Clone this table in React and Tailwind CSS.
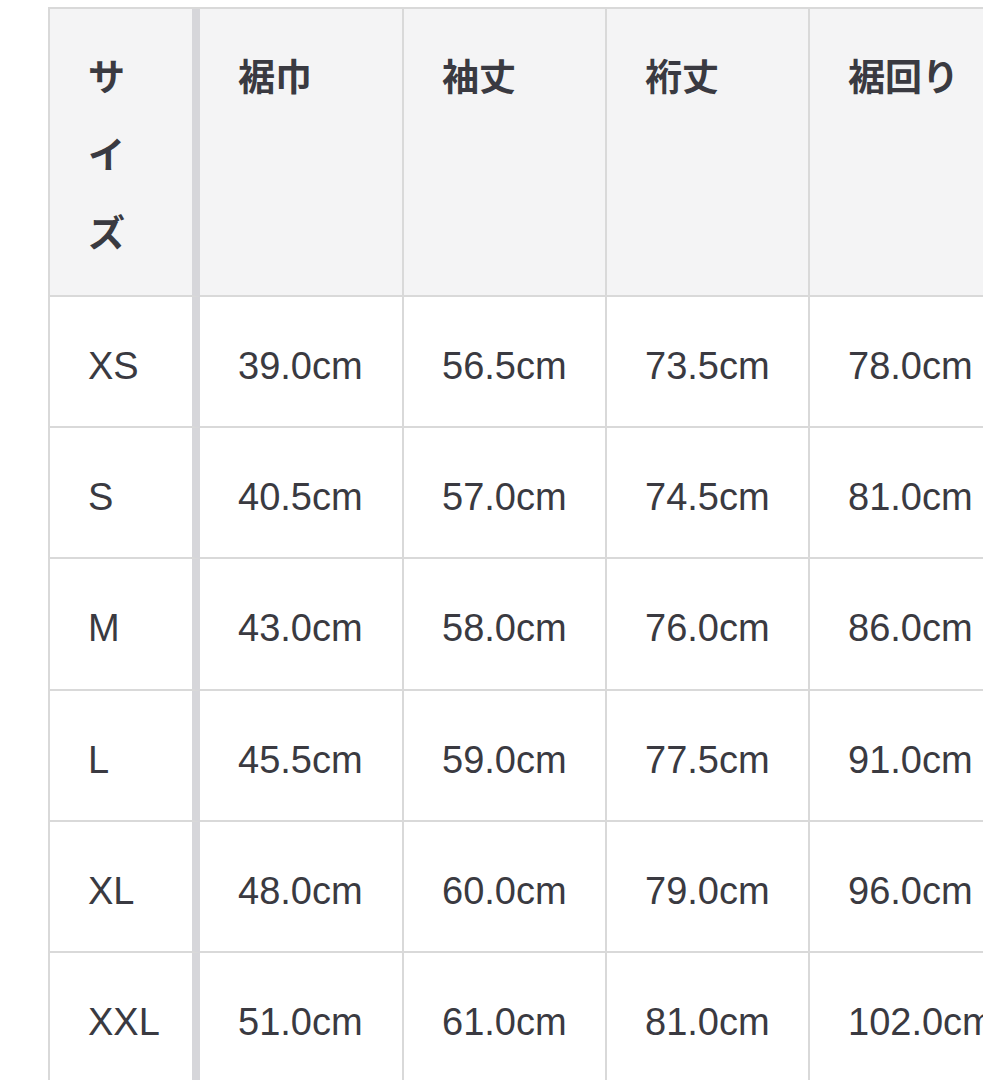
const headers = ["サイズ", "裾巾", "袖丈", "裄丈", "裾回り"];

const rows = [
  ["XS", "39.0cm", "56.5cm", "73.5cm", "78.0cm"],
  ["S", "40.5cm", "57.0cm", "74.5cm", "81.0cm"],
  ["M", "43.0cm", "58.0cm", "76.0cm", "86.0cm"],
  ["L", "45.5cm", "59.0cm", "77.5cm", "91.0cm"],
  ["XL", "48.0cm", "60.0cm", "79.0cm", "96.0cm"],
  ["XXL", "51.0cm", "61.0cm", "81.0cm", "102.0cm"],
];

export default function App() {
  return (
    <div className="w-[983px] h-[1080px] overflow-hidden bg-white">
      <div className="pt-[7px] pl-[48px]">
        <div className="grid w-max grid-cols-[150px_204px_203px_203px_203px] border-t-2 border-l-2 border-[#d9d9d9] text-[#3a3a41]">
          {headers.map((h, i) => (
            <div
              key={h}
              className={`h-[288px] bg-[#f4f4f5] border-b-2 border-[#d9d9d9] pl-[38px] pt-[27px] font-bold text-[37px] leading-[78px] ${
                i === 0 ? "border-r-8 border-r-[#d6d6da] pr-[40px]" : "border-r-2 pr-[8px]"
              }`}
              style={{ fontFamily: '"Noto Sans CJK JP", "Noto Sans", sans-serif' }}
            >
              {h}
            </div>
          ))}
          {rows.map((r) =>
            r.map((c, i) => (
              <div
                key={r[0] + i}
                className={`h-[131.2px] bg-white border-b-2 border-[#d9d9d9] pl-[38px] pt-[30px] text-[38px] leading-[78px] whitespace-nowrap ${
                  i === 0 ? "border-r-8 border-r-[#d6d6da]" : "border-r-2"
                }`}
                style={{ fontFamily: '"Liberation Sans", Arial, sans-serif' }}
              >
                {c}
              </div>
            ))
          )}
        </div>
      </div>
    </div>
  );
}
